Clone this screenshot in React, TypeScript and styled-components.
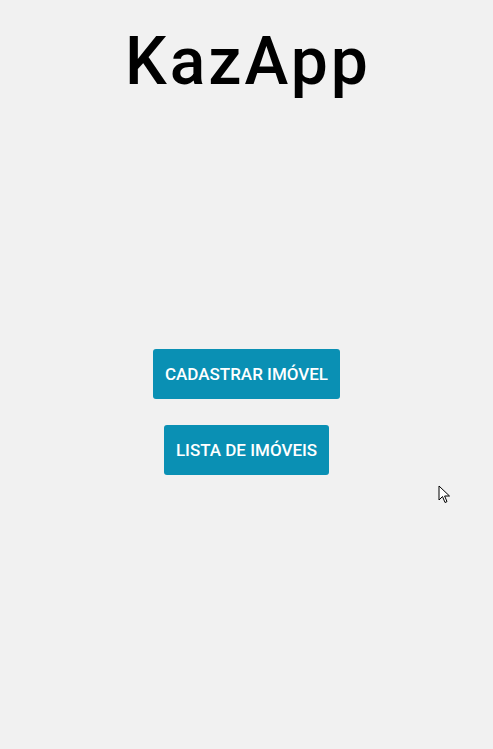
import styled, { createGlobalStyle } from 'styled-components'

const GlobalStyle = createGlobalStyle`
    html, body {
        margin:0;
        padding:0;
        background:#f1f1f1;
        font-family:Roboto, "Noto Sans", sans-serif;
    }
`
const Page = styled.div`
    position:relative;
    min-height:749px;
    display:flex;
    flex-direction:column;
    align-items:center;
`
const Title = styled.h1`
    margin:24px 0 0 0;
    padding-left:3px;
    font-size:66px;
    line-height:76px;
    font-weight:500;
    letter-spacing:3px;
    color:#000;
`
const Menu = styled.div`
    margin-top:249px;
    display:flex;
    flex-direction:column;
    align-items:center;
    gap:26px;
`
const Button = styled.button`
    height:50px;
    padding:0 12px;
    border:none;
    border-radius:3px;
    background:#0a90b4;
    color:#fff;
    font-family:Roboto, sans-serif;
    font-size:17px;
    font-weight:500;
    text-transform:uppercase;
    cursor:pointer;
`
const Pointer = styled.svg`
    position:absolute;
    left:438px;
    top:485px;
`

const App: React.FC = () => {
    return (
        <>
            <GlobalStyle />
            <Page>
                <Title>KazApp</Title>
                <Menu>
                    <Button>Cadastrar imóvel</Button>
                    <Button>Lista de imóveis</Button>
                </Menu>
                <Pointer width="14" height="20" viewBox="0 0 14 20">
                    <path d="M1 1 L1 15 L4.5 11.5 L7 17.5 L9 16.6 L6.6 11 L11.5 11 Z" fill="#fff" stroke="#000" strokeWidth="1" strokeLinejoin="miter" />
                </Pointer>
            </Page>
        </>
    )
}

export default App
